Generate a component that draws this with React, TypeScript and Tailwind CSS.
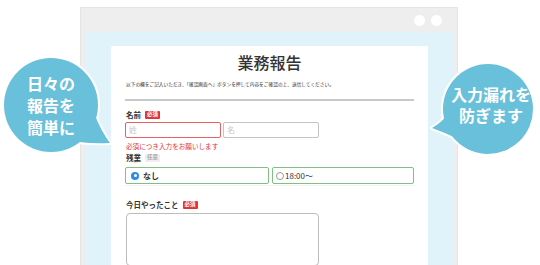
import React from "react";

const jp = { fontFamily: '"Noto Sans CJK JP", "Noto Sans", sans-serif' };

function Badge({ text, gray }: { text: string; gray?: boolean }) {
  return (
    <span
      className={
        "ml-[4px] inline-flex h-[8px] items-center rounded-[1px] px-[2px] text-[5.5px] leading-none " +
        (gray ? "bg-[#eeeeee] text-[#aaaaaa]" : "bg-[#e3342f] text-white")
      }
    >
      {text}
    </span>
  );
}

function Bubbles() {
  const c = "#69c0da";
  return (
    <>
      <svg className="absolute left-0 top-0" width="540" height="265" viewBox="0 0 540 265">
        <g stroke="#ffffff" strokeWidth="4" strokeLinejoin="round" fill={c}>
          <circle cx="51" cy="105" r="47" />
          <path d="M94 113 Q101 131 110 143 Q95 144 79 142 Z" />
          <circle cx="488" cy="109" r="45" />
          <path d="M447 115 Q441 123 432 128 Q443 132 456 138 Z" />
        </g>
        <g fill={c}>
          <circle cx="51" cy="105" r="47" />
          <path d="M94 113 Q101 131 110 143 Q95 144 79 142 Z" />
          <circle cx="488" cy="109" r="45" />
          <path d="M447 115 Q441 123 432 128 Q443 132 456 138 Z" />
        </g>
      </svg>
      <div
        className="absolute left-[1px] top-[72px] w-[100px] text-center text-[16px] font-bold leading-[22px] text-white"
        style={jp}
      >
        日々の
        <br />
        報告を
        <br />
        簡単に
      </div>
      <div
        className="absolute left-[441px] top-[84px] w-[100px] text-center text-[16px] font-bold leading-[21px] text-white"
        style={jp}
      >
        入力漏れを
        <br />
        防ぎます
      </div>
    </>
  );
}

export default function App() {
  return (
    <div className="relative h-[265px] w-[540px] overflow-hidden bg-white" style={jp}>
      <div className="ml-[80px] mt-[7px] h-[270px] w-[378px] border border-[#e4e4e4] bg-[#eeeeee] px-[4px]">
        <div className="flex h-[24px] items-center justify-end gap-[6px] pr-[11px]">
          <span className="h-[11px] w-[11px] rounded-full bg-white" />
          <span className="h-[11px] w-[11px] rounded-full bg-white" />
        </div>
        <div className="h-[250px] bg-[#e0f3fb] pl-[26px] pr-[25px] pt-[14px]">
          <div className="h-[240px] rounded-[2px] bg-white pl-[14px] pr-[14px] pt-[3px] text-[#333333]">
            <div className="h-[26px] text-center text-[16px] font-medium leading-[26px]">業務報告</div>
            <div className="mt-[5px] h-[8px] whitespace-nowrap pl-[1px] text-[4.7px] leading-[8px]">
              以下の欄をご記入いただき、「確認画面へ」ボタンを押して内容をご確認の上、送信してください。
            </div>
            <div className="mt-[11px] h-[2px] bg-[#c9c9c9]" />

            <div className="mt-[9px] flex h-[10px] items-center pl-[1px] text-[7.5px] font-bold leading-none">
              名前
              <Badge text="必須" />
            </div>
            <div className="mt-[2px] flex h-[16px] gap-[2px]">
              <div className="flex h-[16px] w-[96px] items-center rounded-[2px] border-[1.5px] border-[#e86161] pl-[3px] text-[8px] text-[#c8c8c8]">
                姓
              </div>
              <div className="flex h-[16px] w-[96px] items-center rounded-[2px] border-[1.5px] border-[#c4c4c4] pl-[3px] text-[8px] text-[#c8c8c8]">
                名
              </div>
            </div>
            <div className="mt-[3px] flex h-[10px] items-center pl-[1px] text-[6.6px] leading-none text-[#e3342f]">
              必須につき入力をお願いします
            </div>

            <div className="mt-[2px] flex h-[10px] items-center pl-[1px] text-[7.5px] font-bold leading-none">
              残業
              <Badge text="任意" gray />
            </div>
            <div className="mt-[4px] flex h-[17px] gap-[3px]">
              <div className="flex h-[17px] w-[144px] items-center gap-[4px] rounded-[2px] border-[1.5px] border-[#80c080] pl-[5px] text-[8px] font-bold">
                <span className="flex h-[8px] w-[8px] items-center justify-center rounded-full bg-[#2b8be6]">
                  <span className="h-[3px] w-[3px] rounded-full bg-white" />
                </span>
                なし
              </div>
              <div className="flex h-[17px] flex-1 items-center gap-[1px] rounded-[2px] border-[1.5px] border-[#80c080] pl-[3px] text-[8px]">
                <span className="h-[8px] w-[8px] rounded-full border border-[#999999] bg-white" />
                18:00〜
              </div>
            </div>
            <div className="mt-[1px] h-px bg-[#f4f4f4]" />

            <div className="mt-[14px] flex h-[10px] items-center pl-[1px] text-[7.5px] font-bold leading-none">
              今日やったこと
              <Badge text="必須" />
            </div>
            <div className="ml-[1px] mt-[3px] h-[53px] w-[193px] rounded-[4px] border-[1.5px] border-[#bdbdbd]" />
          </div>
        </div>
      </div>
      <Bubbles />
    </div>
  );
}
